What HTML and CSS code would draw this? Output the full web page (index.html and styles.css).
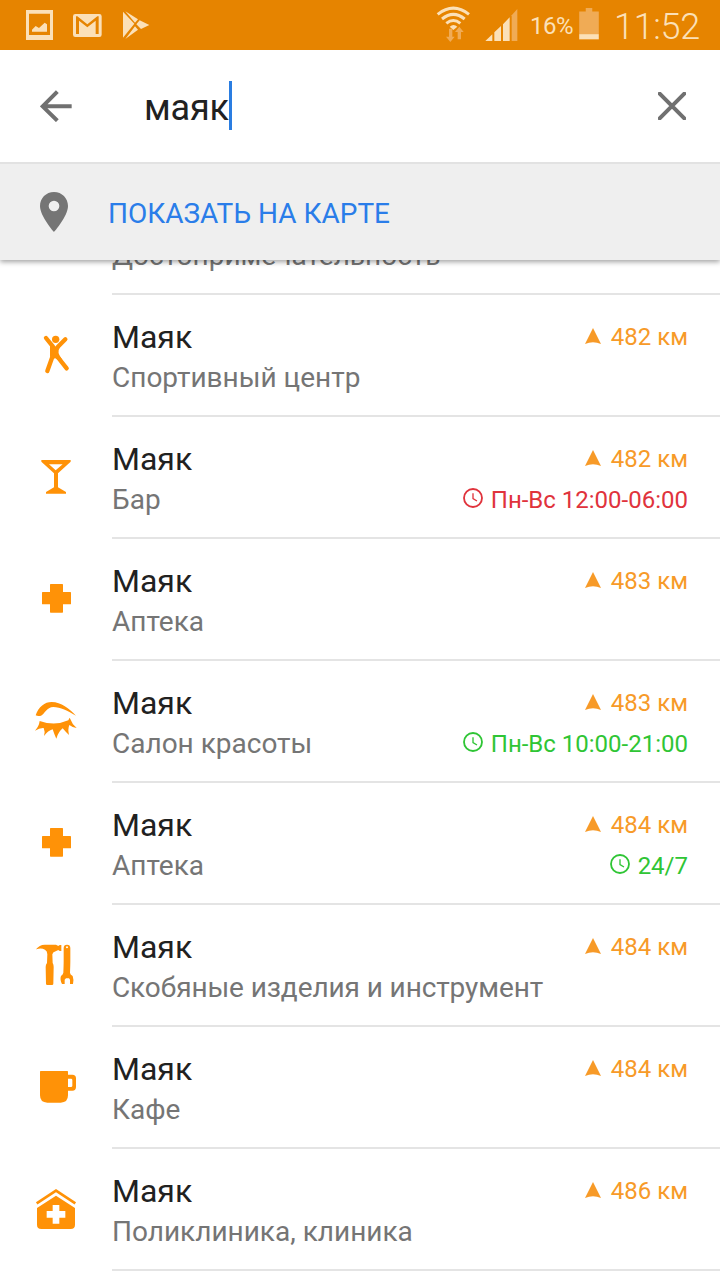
FILE: index.html
```html
<!DOCTYPE html>
<html lang="ru">
<head>
<meta charset="utf-8">
<title>Поиск</title>
<link rel="stylesheet" href="styles.css">
</head>
<body>
<svg class="defs" width="0" height="0">
  <symbol id="arrow" viewBox="0 0 48 48"><path d="M24 0L48 48Q24 38 0 48Z"/></symbol>
  <symbol id="clock" viewBox="0 0 60 60"><circle cx="30" cy="30" r="27" fill="none" stroke="currentColor" stroke-width="5.5"/><path d="M30 16v16l12 7" fill="none" stroke="currentColor" stroke-width="4"/></symbol>
  <symbol id="cross" viewBox="0 -63 336 360"><path d="M152 72h35a2 2 0 0 1 2 2v22h22a2 2 0 0 1 2 2v33a2 2 0 0 1-2 2h-22v23a2 2 0 0 1-2 2h-35a2 2 0 0 1-2-2v-23h-22a2 2 0 0 1-2-2V98a2 2 0 0 1 2-2h22V74a2 2 0 0 1 2-2z"/></symbol>
</svg>
<div class="screen">
  <header class="top">
    <div class="status">
      <svg class="status-left" viewBox="0 0 480 150">
        <path fill-rule="evenodd" d="M78 30h81v90H78zM87 41v64h63V41z"/>
        <path d="M96 95V89l11-11 10 6 17-16 7 5v22z"/>
        <path fill-rule="evenodd" d="M226 42h72q7 0 7 7v55q0 7-7 7h-72q-7 0-7-7V49q0-7 7-7zM228 49v53h9V62l25 20 25-20v40h9V49h-4l-30 24-30-24z"/>
        <path d="M369 35l34 36-34 42zM376 34l38 24-9 10zM419 61l29 14-25 12-14-14zM405 79l9 10-38 28z"/>
      </svg>
      <div class="status-right">
        <svg class="signal" viewBox="0 0 300 150">
          <g fill="none" stroke="#fbe0b8" stroke-width="9"><path d="M53 43Q100 6 147 43"/><path d="M66 57Q100 29 134 57"/><path d="M79 70Q100 53 121 70"/></g>
          <path d="M89 80q12-10 23 0l-12 10z"/>
          <path class="dim" d="M87 86h10v24h7L91 126 78 110h9zM113 118v-22h-8l13-16 13 16h-8v22z"/>
          <path d="M196 123l21-20v20zM223 97l20-19v45h-20zM249 73l20-21v71h-20z"/>
          <path class="dim" d="M275 46l17-19v96h-17z"/>
        </svg>
        <span class="percent">16%</span>
        <svg class="battery" viewBox="0 0 60 98"><path class="dim" d="M20 0h20v11h20v69H0V11h20z"/><path d="M0 80h60v16H0z"/></svg>
        <span class="time">11:52</span>
      </div>
    </div>
    <div class="search">
      <svg class="back" viewBox="0 0 96 96"><path d="M95 49H6M52 5L8 49l44 43"/></svg>
      <span class="query">маяк</span><i class="caret"></i>
      <svg class="clear" viewBox="0 0 84 84"><path d="M5 5l74 74M79 5L5 79"/></svg>
    </div>
    <div class="map">
      <svg class="pin" viewBox="0 0 84 120"><path fill-rule="evenodd" d="M42 0C18 0 0 19 0 42c0 31 42 78 42 78s42-47 42-78C84 19 66 0 42 0zM42 26a16 16 0 1 1 0 32a16 16 0 1 1 0-32z"/></svg>
      <span class="map-label">ПОКАЗАТЬ НА КАРТЕ</span>
    </div>
  </header>
  <main class="list">
    <section class="row first"><div class="body"><div class="sub">Достопримечательность</div></div></section>

    <section class="row">
      <svg class="icon" viewBox="0 -45 336 360"><circle cx="167" cy="88" r="11"/><g fill="none" stroke="#ff9207" stroke-width="13" stroke-linecap="round"><path d="M138 84l21 26M196 88l-23 23M158 138l-16 45M166 132l34 43"/></g><path d="M150 103q17 13 33 0l-7 18q-2 6 3 16l8 12-10 3-11-7-13 3-3-10z"/></svg>
      <div class="body"><div><div class="title">Маяк</div><div class="sub">Спортивный центр</div></div>
      <div class="info"><div class="dist"><svg><use href="#arrow"/></svg>482 км</div></div></div>
    </section>

    <section class="row">
      <svg class="icon" viewBox="0 321 336 360"><path fill-rule="evenodd" d="M124 450h88v5l-38 35v42l24 14v5h-60v-5l24-14v-42l-38-35zM147 463l20 18 21-18z"/></svg>
      <div class="body"><div><div class="title">Маяк</div><div class="sub">Бар</div></div>
      <div class="info"><div class="dist"><svg><use href="#arrow"/></svg>482 км</div><div class="hours closed"><svg><use href="#clock"/></svg>Пн-Вс 12:00-06:00</div></div></div>
    </section>

    <section class="row">
      <svg class="icon"><use href="#cross"/></svg>
      <div class="body"><div><div class="title">Маяк</div><div class="sub">Аптека</div></div>
      <div class="info"><div class="dist"><svg><use href="#arrow"/></svg>483 км</div></div></div>
    </section>

    <section class="row">
      <svg class="icon" viewBox="0 303 336 360"><path d="M107 466C116 440 134 426 155 426C184 426 207 446 228 467C203 453 181 441 160 441C140 441 132 464 123 467Q114 470 107 466z"/><path d="M119 483Q165 499 205 481L209 473Q216 492 230 504Q218 503 208 495Q203 507 207 525Q197 516 188 505Q175 515 169 536Q162 521 158 508Q144 512 132 528Q136 514 131 504Q119 503 105 512Q117 499 119 483z"/></svg>
      <div class="body"><div><div class="title">Маяк</div><div class="sub">Салон красоты</div></div>
      <div class="info"><div class="dist"><svg><use href="#arrow"/></svg>483 км</div><div class="hours open"><svg><use href="#clock"/></svg>Пн-Вс 10:00-21:00</div></div></div>
    </section>

    <section class="row">
      <svg class="icon"><use href="#cross"/></svg>
      <div class="body"><div><div class="title">Маяк</div><div class="sub">Аптека</div></div>
      <div class="info"><div class="dist"><svg><use href="#arrow"/></svg>484 км</div><div class="hours open"><svg><use href="#clock"/></svg>24/7</div></div></div>
    </section>

    <section class="row">
      <svg class="icon" viewBox="0 -45 336 360"><path d="M108 88Q118 74 134 74h34l7 4q2-4 9-3v18q-7 1-9-3l-8 4q-8 1-10 9l1 26q3 5 3 12l-1 50q0 4-4 4h-14q-4 0-4-4l-1-50q0-7 4-12l1-26q0-10-7-14-12-7-26-1z"/><path fill-rule="evenodd" d="M191 84q0-10 10-10t10 10v40q0 10-1 34 0 6 8 10 4 11 1 24h-9v-13l-3-4h-9l-4 4v13h-8q-7-13-3-24 6-4 7-10 1-24 1-34zM201 79a3 3 0 1 0 0 6a3 3 0 1 0 0-6z"/></svg>
      <div class="body"><div><div class="title">Маяк</div><div class="sub tight">Скобяные изделия и инструмент</div></div>
      <div class="info"><div class="dist"><svg><use href="#arrow"/></svg>484 км</div></div></div>
    </section>

    <section class="row">
      <svg class="icon" viewBox="0 321 336 360"><path fill-rule="evenodd" d="M122 453h80q2 0 2 2v9h13q11 0 11 11v26q0 11-11 11h-13v14q0 22-22 22h-40q-22 0-22-22v-71q0-2 2-2zM204 476v25h9q4 0 4-4v-17q0-4-4-4z"/></svg>
      <div class="body"><div><div class="title">Маяк</div><div class="sub">Кафе</div></div>
      <div class="info"><div class="dist"><svg><use href="#arrow"/></svg>484 км</div></div></div>
    </section>

    <section class="row">
      <svg class="icon" viewBox="0 27 336 360"><path d="M110 190l58-38 58 38" fill="none" stroke="#ff9207" stroke-width="8"/><path fill-rule="evenodd" d="M168 167l57 37v50q0 13-13 13h-88q-13 0-13-13v-50zM158 195v18h-18v20h18v18h20v-18h18v-20h-18v-18z"/></svg>
      <div class="body"><div><div class="title">Маяк</div><div class="sub">Поликлиника, клиника</div></div>
      <div class="info"><div class="dist"><svg><use href="#arrow"/></svg>486 км</div></div></div>
    </section>
  </main>
</div>
</body>
</html>
```

FILE: styles.css
```css
* { box-sizing: border-box; }
body { margin: 0; background: #fff; font-family: Roboto, "Noto Sans", sans-serif; }
svg { display: block; flex: none; }
.defs { position: absolute; }
.screen { width: 720px; height: 1280px; overflow: hidden; background: #fff; }

.top { position: relative; z-index: 1; height: 260px; background: #fff; box-shadow: 0 2px 5px rgba(0, 0, 0, .36); }
.status { display: flex; justify-content: space-between; height: 50px; background: #e68400; color: #fbe0b8; fill: #fbe0b8; }
.status-left { width: 160px; height: 50px; }
.status-right { display: flex; width: 300px; height: 50px; }
.signal { width: 100px; height: 50px; margin-right: 10px; }
.dim { fill: #f0ab55; }
.percent { width: 49px; font-size: 24px; line-height: 53px; white-space: nowrap; letter-spacing: -.5px; }
.battery { width: 20px; height: 32px; margin-top: 8px; }
.time { margin-left: 15px; font-size: 36px; line-height: 54px; font-weight: 300; letter-spacing: -.3px; }

.search { display: flex; align-items: center; height: 112px; padding: 0 34px 0 40px; }
.back { width: 32px; height: 32px; }
.back path, .clear path { fill: none; stroke: #707070; stroke-width: 12; }
.clear path { stroke-linecap: round; }
.query { margin-left: 72px; font-size: 36px; line-height: 42px; padding-top: 3px; color: #212121; letter-spacing: -.2px; }
.caret { width: 3px; height: 49px; margin-bottom: 1px; background: #2a7de1; }
.clear { width: 28px; height: 28px; margin-left: auto; }

.map { display: flex; align-items: center; height: 98px; padding-left: 40px; background: #efefef; border-top: 2px solid #e2e2e2; }
.pin { width: 28px; height: 40px; fill: #757575; }
.map-label { margin-left: 40px; padding-top: 4px; font-size: 28px; line-height: 36px; color: #2a7de9; }

.list { margin-top: -87px; }
.row { display: flex; height: 122px; }
.icon { width: 112px; height: 120px; fill: #ff9207; }
.body { display: flex; flex: 1; justify-content: space-between; padding: 22px 32px 0 0; border-bottom: 2px solid #e4e4e4; line-height: 40px; white-space: nowrap; }
.first { padding-left: 112px; }
.first .body { padding-top: 62px; }
.title { font-size: 32px; color: #212121; }
.sub { padding-top: 1px; font-size: 28px; color: #757575; }
.tight { letter-spacing: -.1px; }
.info { font-size: 24px; text-align: right; }
.dist, .hours { display: flex; justify-content: flex-end; align-items: center; }
.dist { color: #f79a28; }
.dist svg { width: 16px; height: 16px; margin: 0 10px 2px 0; fill: #f79a28; }
.hours { padding-top: 1px; }
.hours svg { width: 20px; height: 20px; margin: 0 8px 4px 0; }
.closed { color: #e0333c; }
.open { color: #2fc535; }
```
